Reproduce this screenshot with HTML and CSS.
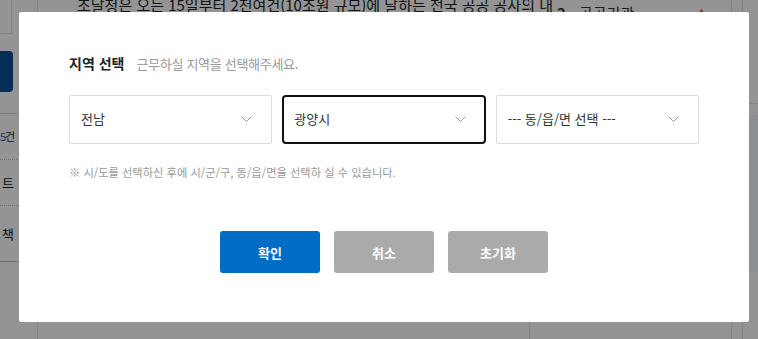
FILE: index.html
```html
<!DOCTYPE html>
<html lang="ko">
<head>
    <meta charset="UTF-8">
    <meta name="viewport" content="width=device-width, initial-scale=1.0">
    <title>지역 선택</title>
    <link rel="stylesheet" href="styles.css">
</head>
<body>
    <div class="page">
        <aside class="side">
            <div class="side-box"></div>
            <div class="side-btn"></div>
            <ul class="side-list">
                <li class="count"><span class="num">5</span>건</li>
                <li>트</li>
                <li>책</li>
            </ul>
        </aside>
        <main class="news">
            <p class="news-line">조달청은 오는 15일부터 2천여건(10조원 규모)에 달하는 전국 공공 공사의 내</p>
        </main>
        <section class="rank">
            <p class="rank-row"><span class="rank-no">2</span><span class="rank-name">공공기관</span><span class="rank-up">▲</span></p>
        </section>
        <div class="edge"></div>
        <aside class="right">
            <div class="right-top"></div>
            <div class="right-panel"></div>
        </aside>
    </div>

    <div class="dim"></div>

    <div class="modal">
        <div class="modal-head">
            <h2>지역 선택</h2>
            <p>근무하실 지역을 선택해주세요.</p>
        </div>

        <div class="selects">
            <div class="select">
                <span>전남</span>
                <svg class="chev" width="11" height="6" viewBox="0 0 11 6"><path d="M0.5 0.5 L5.5 5.5 L10.5 0.5" fill="none" stroke="#9a9a9a" stroke-width="1"/></svg>
            </div>
            <div class="select is-focus">
                <span>광양시</span>
                <svg class="chev" width="11" height="6" viewBox="0 0 11 6"><path d="M0.5 0.5 L5.5 5.5 L10.5 0.5" fill="none" stroke="#9a9a9a" stroke-width="1"/></svg>
            </div>
            <div class="select">
                <span>--- 동/읍/면 선택 ---</span>
                <svg class="chev" width="11" height="6" viewBox="0 0 11 6"><path d="M0.5 0.5 L5.5 5.5 L10.5 0.5" fill="none" stroke="#9a9a9a" stroke-width="1"/></svg>
            </div>
        </div>

        <p class="note">※ 시/도를 선택하신 후에 시/군/구, 동/읍/면을 선택하 실 수 있습니다.</p>

        <div class="actions">
            <button class="btn btn-primary">확인</button>
            <button class="btn btn-gray">취소</button>
            <button class="btn btn-gray">초기화</button>
        </div>
    </div>
</body>
</html>
```

FILE: styles.css
```css
html, body {
    margin: 0;
    padding: 0;
    height: 100%;
    overflow: hidden;
}
body {
    font-family: "Noto Sans CJK KR", "Noto Sans", sans-serif;
    background: #fff;
    color: #333;
}

/* page behind the popup */
.page {
    display: grid;
    grid-template-columns: 38px 491px 202px 12px 15px;
    height: 339px;
}
.side {
    border-right: 1px solid #e2e2e2;
    box-sizing: border-box;
}
.side-box {
    width: 12px;
    height: 34px;
    border: 1px solid #ddd;
    border-left: none;
    border-top: none;
    box-sizing: border-box;
}
.side-btn {
    width: 13px;
    height: 41px;
    margin-top: 17px;
    background: #0a4f93;
    border-radius: 0 4px 4px 0;
}
.side-list {
    list-style: none;
    margin: 21px 0 0;
    padding: 0;
    width: 17px;
    border-top: 1px solid #ccc;
}
.side-list li {
    height: 45px;
    line-height: 45px;
    font-size: 13px;
    white-space: nowrap;
    text-align: right;
    padding-right: 3px;
    border-bottom: 1px dotted #bbb;
    color: #222;
}
.side-list li.count {
    font-size: 11px;
    letter-spacing: -1px;
}
.side-list li:last-child {
    height: 55px;
    line-height: 55px;
    border-bottom: 1px solid #bbb;
}
.side-list .num {
    color: #0a5fb0;
}
.news {
    padding-left: 39px;
}
.news-line {
    margin: -6px 0 0;
    font-size: 15px;
    line-height: 22px;
    white-space: nowrap;
    color: #222;
}
.rank {
    border-left: 1px solid #e2e2e2;
}
.rank-row {
    margin: 2px 0 0;
    display: flex;
    font-size: 15px;
    line-height: 22px;
    white-space: nowrap;
}
.rank-no {
    margin-left: 27px;
    width: 22px;
    font-weight: bold;
}
.rank-name {
    width: 118px;
}
.rank-up {
    color: #e05a1c;
    font-size: 9px;
}
.edge {
    border-left: 1px solid #e2e2e2;
    border-right: 1px solid #e2e2e2;
}
.right-top {
    height: 103px;
    border-bottom: 1px solid #e2e2e2;
}
.right-panel {
    margin-top: 11px;
    height: 157px;
    background: #f0f7fd;
}

.dim {
    position: fixed;
    inset: 0;
    background: rgba(0, 0, 0, 0.42);
}

/* popup */
.modal {
    position: absolute;
    top: 12px;
    left: 19px;
    width: 730px;
    height: 310px;
    box-sizing: border-box;
    padding: 41px 50px 0;
    background: #fff;
    border-radius: 2px;
}
.modal-head {
    display: flex;
    align-items: baseline;
    gap: 12px;
}
.modal-head h2 {
    margin: 0;
    font-size: 14px;
    line-height: 20px;
    font-weight: bold;
    color: #222;
}
.modal-head p {
    margin: 0;
    font-size: 13px;
    line-height: 20px;
    letter-spacing: -0.3px;
    color: #999;
}

.selects {
    display: grid;
    grid-template-columns: repeat(3, 1fr);
    gap: 10px;
    margin-top: 21px;
}
.select {
    height: 49px;
    box-sizing: border-box;
    border: 1px solid #dcdcdc;
    border-radius: 2px;
    padding: 0 19px 2px 11px;
    display: flex;
    align-items: center;
    justify-content: space-between;
    font-size: 13px;
    color: #333;
}
.select.is-focus {
    border: 2px solid #111;
    border-radius: 4px;
    padding: 0 18px 2px 10px;
}
.chev {
    display: block;
}

.note {
    margin: 20px 0 0;
    font-size: 11.25px;
    line-height: 16px;
    color: #999;
}

.actions {
    display: flex;
    justify-content: center;
    gap: 14px;
    margin-top: 51px;
}
.btn {
    width: 100px;
    height: 42px;
    border: none;
    border-radius: 3px;
    font-family: inherit;
    font-size: 13px;
    font-weight: bold;
    color: #fff;
    cursor: pointer;
}
.btn-primary {
    background: #006cc6;
}
.btn-gray {
    background: #aaa;
}
```
